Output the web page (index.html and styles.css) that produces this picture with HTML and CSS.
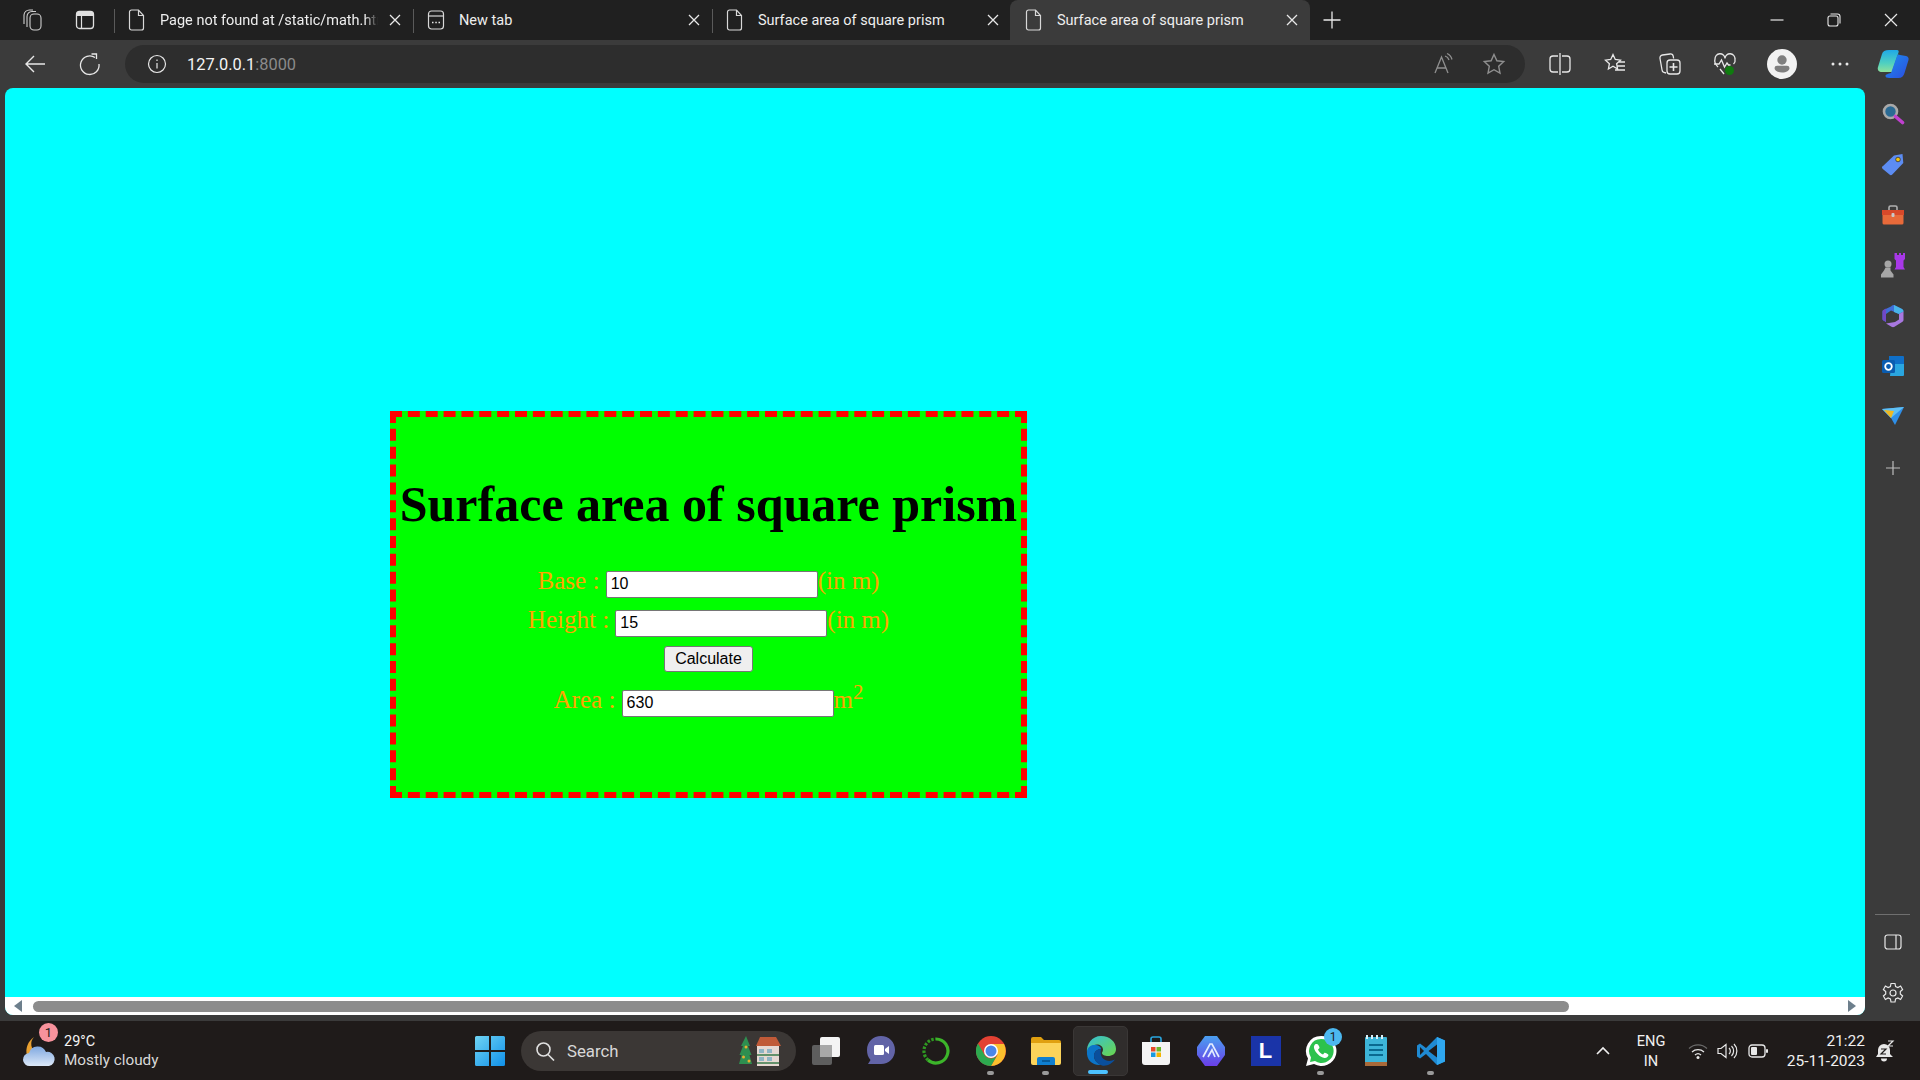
FILE: index.html
```html
<!DOCTYPE html>
<html lang="en">
<head>
    <meta charset="UTF-8">
    <title>Surface area of square prism</title>
    <link rel="stylesheet" href="styles.css">
</head>
<body>
    <svg class="defs" width="0" height="0">
        <symbol id="doc" viewBox="0 0 18 24"><path d="M3.5 2h7l5 5.5V20a2 2 0 0 1-2 2h-10a2 2 0 0 1-2-2V4a2 2 0 0 1 2-2zM10.500 2v5.500h5" fill="none" stroke="#d8d8d8" stroke-width="1.200"/></symbol>
        <symbol id="x" viewBox="0 0 16 16"><path d="M3 3l10 10M13 3L3 13" stroke="#e8e8e8" stroke-width="1.300"/></symbol>
    </svg>

    <!-- Tab strip -->
    <div class="tabstrip">
        <div class="strip-btn"><svg width="24" height="24" viewBox="0 0 24 24" fill="none" stroke="#cfcfcf" stroke-width="1.100"><rect x="10" y="6" width="11" height="16" rx="4"/><path d="M7 19V8.500A5 5 0 0 1 12 3.500h4"/><path d="M4 16V7a5.500 5.500 0 0 1 5.500-5H13"/></svg></div>
        <div class="strip-btn narrow"><svg width="22" height="24" viewBox="0 0 22 24"><rect x="2.500" y="3.500" width="17" height="17" rx="3" fill="none" stroke="#e0e0e0" stroke-width="1.300"/><path d="M2.500 8V6.500a3 3 0 0 1 3-3h11a3 3 0 0 1 3 3V8z" fill="#e0e0e0"/><path d="M7.500 8v12" stroke="#e0e0e0" stroke-width="1.200"/></svg></div>
        <div class="tab sep">
            <svg class="tab-icon" width="18" height="24"><use href="#doc"/></svg>
            <span class="tab-label fade">Page not found at /static/math.html</span>
            <svg class="tab-x" width="16" height="16"><use href="#x"/></svg>
        </div>
        <div class="tab sep">
            <svg class="tab-icon" width="18" height="24" viewBox="0 0 18 24"><rect x="1.500" y="3" width="15" height="18" rx="3" fill="none" stroke="#d8d8d8" stroke-width="1.200"/><path d="M2 8h14" stroke="#d8d8d8" stroke-width="1.200"/><path d="M5 14.500h1.500M8.300 14.500h1.500M11.500 14.500H13" stroke="#e8e8e8" stroke-width="1.600"/></svg>
            <span class="tab-label">New tab</span>
            <svg class="tab-x" width="16" height="16"><use href="#x"/></svg>
        </div>
        <div class="tab sep short">
            <svg class="tab-icon" width="18" height="24"><use href="#doc"/></svg>
            <span class="tab-label">Surface area of square prism</span>
            <svg class="tab-x" width="16" height="16"><use href="#x"/></svg>
        </div>
        <div class="tab active">
            <svg class="tab-icon" width="18" height="24"><use href="#doc"/></svg>
            <span class="tab-label">Surface area of square prism</span>
            <svg class="tab-x" width="16" height="16"><use href="#x"/></svg>
        </div>
        <div class="new-tab"><svg width="20" height="20" viewBox="0 0 20 20"><path d="M10 1.500v17M1.500 10h17" stroke="#e8e8e8" stroke-width="1.300"/></svg></div>
        <div class="win-btns">
            <svg width="16" height="16" viewBox="0 0 16 16"><path d="M1.500 8h13" stroke="#e8e8e8" stroke-width="1.200"/></svg>
            <svg width="16" height="16" viewBox="0 0 16 16" fill="none" stroke="#e8e8e8" stroke-width="1.100"><rect x="2" y="4" width="10" height="10" rx="2"/><path d="M4.500 2h7A2.500 2.500 0 0 1 14 4.500v7"/></svg>
            <svg width="16" height="16" viewBox="0 0 16 16"><path d="M2 2l12 12M14 2L2 14" stroke="#e8e8e8" stroke-width="1.200"/></svg>
        </div>
    </div>

    <!-- Address bar and toolbar -->
    <div class="toolbar">
        <div class="nav-btn"><svg width="24" height="24" viewBox="0 0 24 24" fill="none" stroke="#e8e8e8" stroke-width="1.400"><path d="M22 12H3M11 4l-8 8 8 8"/></svg></div>
        <div class="nav-btn second"><svg width="24" height="24" viewBox="0 0 24 24" fill="none" stroke="#e8e8e8" stroke-width="1.300"><path d="M17 5.500A9.300 9.300 0 1 0 21 12"/><path d="M13.500 2h5v5"/></svg></div>
        <div class="address">
            <svg width="20" height="20" viewBox="0 0 20 20" fill="none" stroke="#e8e8e8" stroke-width="1.200"><circle cx="10" cy="10" r="8.500"/><path d="M10 9v5.500M10 5.500v1.600"/></svg>
            <span class="url">127.0.0.1<span class="url-port">:8000</span></span>
            <svg class="read" width="24" height="24" viewBox="0 0 24 24" fill="none" stroke="#8f8f8f" stroke-width="1.300"><path d="M3 21L9.500 5 16 21M5.300 16h8.400"/><path d="M13 4a6 6 0 0 1 4 4M15 1.500a9 9 0 0 1 5 6"/></svg>
            <svg width="24" height="24" viewBox="0 0 24 24" fill="none" stroke="#8f8f8f" stroke-width="1.400"><path d="M12 2.500l2.900 6.300 6.800.8-5 4.700 1.300 6.800-6-3.400-6 3.400 1.300-6.800-5-4.700 6.800-.8z"/></svg>
        </div>
        <div class="tools">
            <div class="tool"><svg width="22" height="24" viewBox="0 0 22 24" fill="none" stroke="#e8e8e8" stroke-width="1.300"><path d="M9 4H4a3 3 0 0 0-3 3v10a3 3 0 0 0 3 3h5M13 4h5a3 3 0 0 1 3 3v10a3 3 0 0 1-3 3h-5M11 1v22"/></svg></div>
            <div class="tool"><svg width="24" height="24" viewBox="0 0 24 24" fill="none" stroke="#e8e8e8" stroke-width="1.300"><path d="M10 2.500l2.300 5 5.200.7-3.900 3.500 1 5.300-4.600-2.700-4.600 2.700 1-5.300L2.500 8.200l5.200-.7zM16 10h6M14.500 14h7.500M12 18h10"/></svg></div>
            <div class="tool"><svg width="24" height="24" viewBox="0 0 24 24" fill="none" stroke="#e8e8e8" stroke-width="1.300"><path d="M8 21l-2-.5a3 3 0 0 1-2-2.800L2 6.500A3 3 0 0 1 4.500 3L12 2a3 3 0 0 1 3.300 2.500l.3 2"/><rect x="9" y="8" width="13" height="14" rx="3"/><path d="M15.500 11v8M11.500 15h8" stroke-width="1.600"/></svg></div>
            <div class="tool"><svg width="24" height="24" viewBox="0 0 24 24" fill="none" stroke="#e8e8e8" stroke-width="1.300"><path d="M5 15C2 12 1 10 2 7a5 5 0 0 1 10-.5A5 5 0 0 1 22 7c.5 2-.5 4-1.500 5"/><path d="M1 12h5l2.500-4 3 7 2.500-4 1.500 2h2M7 17l4 5"/><circle cx="16.500" cy="18.500" r="4.500" fill="#0f7b0f" stroke="none"/></svg></div>
            <div class="avatar"><svg width="30" height="30" viewBox="0 0 30 30"><circle cx="15" cy="15" r="15" fill="#f2f2f2"/><circle cx="15" cy="11" r="4.700" fill="#7e7e7e"/><path d="M7.500 19a2.500 2.500 0 0 1 2.500-2.300h10a2.500 2.500 0 0 1 2.500 2.300c0 2.500-3 4.500-7.500 4.500s-7.500-2-7.500-4.500z" fill="#7e7e7e"/></svg></div>
            <div class="tool"><svg width="20" height="6" viewBox="0 0 20 6" fill="#e8e8e8"><circle cx="3" cy="3" r="1.500"/><circle cx="10" cy="3" r="1.500"/><circle cx="17" cy="3" r="1.500"/></svg></div>
            <div class="tool copilot"><svg width="32" height="30" viewBox="0 0 32 30"><defs><linearGradient id="cpa" x1="0" y1="0" x2="0" y2="1"><stop offset="0" stop-color="#1fa8e8"/><stop offset=".6" stop-color="#4fd0c0"/><stop offset="1" stop-color="#8fe09a"/></linearGradient><linearGradient id="cpb" x1="0" y1="0" x2="1" y2="1"><stop offset="0" stop-color="#1b8fee"/><stop offset="1" stop-color="#2d4de0"/></linearGradient></defs><path d="M12 1h8c1.500 0 2 1 1.500 2.500L15 23H5c-3 0-5-2-4-5l4-13c.7-2.500 3-4 7-4z" fill="url(#cpa)"/><path d="M14 24l6-17c.5-1.500 1.500-2 3-1l6 1c2 .5 3 2 2.500 4l-4 13c-.7 3-3 5-6 5h-9c-3 0-4-1-4-2 0-2 3-2 5.500-3z" fill="url(#cpb)"/></svg></div>
        </div>
    </div>

    <div class="main">
        <div class="viewport">
            <div class="page">
                <div class="card">
                    <h1 class="card-title">Surface area of square prism</h1>
                    <div class="field">Base : <input class="num" type="text" value="10">(in m)</div>
                    <div class="field">Height : <input class="num" type="text" value="15">(in m)</div>
                    <div class="calc-row"><button class="calc" type="button">Calculate</button></div>
                    <div class="field result">Area : <input class="num" type="text" value="630">m<sup>2</sup></div>
                </div>
            </div>
            <div class="hscroll">
                <svg width="10" height="12" viewBox="0 0 10 12"><path d="M9 0v12L1 6z" fill="#6d7f8c"/></svg>
                <div class="hscroll-track"><div class="hscroll-thumb"></div></div>
                <svg width="10" height="12" viewBox="0 0 10 12"><path d="M1 0v12l8-6z" fill="#6d7f8c"/></svg>
            </div>
        </div>

        <!-- Edge sidebar -->
        <div class="sidebar">
            <div class="side-btn"><svg width="24" height="24" viewBox="0 0 24 24"><circle cx="9.500" cy="9.500" r="6.500" fill="#2a6a94" stroke="#a9a9a9" stroke-width="2.600"/><path d="M14.500 14.500l7 6" stroke="#c040d0" stroke-width="3.600" stroke-linecap="round"/></svg></div>
            <div class="side-btn"><svg width="24" height="24" viewBox="0 0 24 24"><path d="M1.500 13.500L13 2.500l8.500-1.500.8 9-11 11.500a2 2 0 0 1-2.800 0l-7-5.800a2 2 0 0 1 0-2.700z" fill="#5c8cf2"/><circle cx="17" cy="6.500" r="2.300" fill="#f2c40f" stroke="#333" stroke-width=".8"/></svg></div>
            <div class="side-btn"><svg width="24" height="22" viewBox="0 0 24 22"><path d="M8 6V3.500A1.500 1.500 0 0 1 9.500 2h5A1.500 1.500 0 0 1 16 3.500V6" fill="none" stroke="#b0b0b0" stroke-width="1.600"/><path d="M1 6h22v5H1z" fill="#d8492a"/><path d="M1.500 11h21v8a1.500 1.500 0 0 1-1.500 1.500H3A1.500 1.500 0 0 1 1.500 19z" fill="#e86a3a"/><rect x="10.500" y="9" width="3" height="4" rx="1" fill="#c9c9c9"/></svg></div>
            <div class="side-btn"><svg width="24" height="26" viewBox="0 0 24 26"><path d="M13.500 0h2.500v2h2V0h2v2h2V0h2v6l-1.500 1.500V14l1.500 2.500h-10.500l1.500-2.500V7.500L13.500 6z" fill="#a838e8"/><circle cx="7" cy="11" r="3.500" fill="#a6a6a6"/><path d="M4.500 14.500h5v3l3 4v3H0v-3l3-4z" fill="#a6a6a6"/></svg></div>
            <div class="side-btn"><svg width="22" height="24" viewBox="0 0 22 24"><path d="M9 2.500A3 3 0 0 1 12 1l8 4a3 3 0 0 1 1.500 2.500L17 10l-8-3.500L4 10v8l-2.500-1.500A1.500 1.500 0 0 1 .5 15V7.500A2 2 0 0 1 1.500 6z" fill="#3f6ed8"/><path d="M12 1l8 4a3 3 0 0 1 1.500 2.500L17 10l-5-2z" fill="#48b4e8"/><path d="M21.500 7.500V16a2 2 0 0 1-1 1.700l-8 5a3 3 0 0 1-3 0L4 19.500 13 18l4-2.500V10z" fill="#a878e0"/><path d="M.5 7.500A2 2 0 0 1 1.500 6L4 4.500V18l-2.500-1.500A1.500 1.500 0 0 1 .5 15z" fill="#7248c8"/></svg></div>
            <div class="side-btn"><svg width="24" height="24" viewBox="0 0 24 24"><path d="M8 1h14a1 1 0 0 1 1 1v7H8z" fill="#0f6fc8"/><path d="M10 9h13v11a1 1 0 0 1-1 1H9z" fill="#2aa6e0"/><rect x="1" y="5" width="13" height="13" rx="1.500" fill="#0a5cb0"/><circle cx="7.500" cy="11.500" r="3.300" fill="none" stroke="#fff" stroke-width="1.800"/></svg></div>
            <div class="side-btn"><svg width="24" height="22" viewBox="0 0 24 22"><path d="M1 3l22-2-9 18-4-7z" fill="#2f8fe8"/><path d="M1 3l9 9L23 1z" fill="#5fc0f4"/><path d="M3 4l7 8 3-7z" fill="#f0b820"/></svg></div>
            <div class="side-btn"><svg width="16" height="16" viewBox="0 0 16 16"><path d="M8 1v14M1 8h14" stroke="#bdbdbd" stroke-width="1.200"/></svg></div>
            <div class="side-end">
                <div class="side-line"></div>
                <div class="side-btn"><svg width="20" height="20" viewBox="0 0 20 20" fill="none" stroke="#e8e8e8" stroke-width="1.200"><rect x="2" y="3" width="16" height="14" rx="2.500"/><path d="M13 3v14"/></svg></div>
                <div class="side-btn"><svg width="22" height="22" viewBox="0 0 22 22" fill="none" stroke="#e8e8e8" stroke-width="1.200"><circle cx="11" cy="11" r="3"/><path d="M9 1.500h4l.6 3 2.300 1 2.700-1.500 2 3.500-2.300 2v2.500l2.300 2-2 3.500-2.700-1.500-2.300 1-.6 3H9l-.6-3-2.300-1-2.700 1.500-2-3.500 2.300-2V9.500L1.400 7.500l2-3.500 2.700 1.500 2.300-1z"/></svg></div>
            </div>
        </div>
    </div>

    <!-- Windows taskbar -->
    <div class="taskbar">
        <div class="weather">
            <div class="weather-icon">
                <svg width="36" height="36" viewBox="0 0 36 36"><defs><linearGradient id="cloud" x1="0" y1="0" x2="0" y2="1"><stop offset="0" stop-color="#7fa8e0"/><stop offset="1" stop-color="#dce8f8"/></linearGradient></defs><path d="M12 4a10 10 0 0 0 3 16l-10 2C3 16 6 8 12 4z" fill="#e8a030"/><path d="M8 33a6.500 6.500 0 0 1-1-13 9 9 0 0 1 17-1 7 7 0 0 1 3 14z" fill="url(#cloud)"/></svg>
                <span class="weather-badge">1</span>
            </div>
            <div class="weather-text"><div class="temp">29°C</div><div>Mostly cloudy</div></div>
        </div>
        <div class="start"><svg width="30" height="30" viewBox="0 0 30 30"><defs><linearGradient id="win" x1="0" y1="0" x2="1" y2="1"><stop offset="0" stop-color="#6fd4f4"/><stop offset="1" stop-color="#1090e8"/></linearGradient></defs><path d="M0 1.500A1.500 1.500 0 0 1 1.500 0H14v14H0zM16 0h12.500A1.500 1.500 0 0 1 30 1.500V14H16zM0 16h14v14H1.500A1.500 1.500 0 0 1 0 28.500zM16 16h14v12.500a1.500 1.500 0 0 1-1.500 1.500H16z" fill="url(#win)"/></svg></div>
        <div class="search">
            <svg width="20" height="20" viewBox="0 0 20 20" fill="none" stroke="#e0e0e0" stroke-width="1.600"><circle cx="8.500" cy="8.500" r="6.500"/><path d="M13 13.500l6 6"/></svg>
            <span class="search-text">Search</span>
            <svg class="search-art" width="44" height="32" viewBox="0 0 44 32"><path d="M9 1l4 10h-2l3.500 9h-2l2.500 9H2l2.500-9h-2L6 11H4z" fill="#2e8f50"/><circle cx="9" cy="12" r="1.500" fill="#e8b030"/><circle cx="6.500" cy="22" r="1.500" fill="#e8b030"/><circle cx="12" cy="26" r="1.500" fill="#e8b030"/><rect x="20" y="10" width="22" height="21" fill="#e6d8d2"/><path d="M19 11l4-9h16l5 9z" fill="#c05a38"/><path d="M22 14h5v4h-5zM30 14h5v4h-5zM22 22h5v4h-5zM30 22h5v4h-5z" fill="#8fb4c4"/><path d="M20 20h22M20 28h22" stroke="#3a7a4a" stroke-width="1.500"/></svg>
        </div>
        <div class="task-icons">
            <div class="task"><svg width="30" height="30" viewBox="0 0 30 30"><rect x="1" y="9" width="20" height="20" rx="2" fill="#5e5e5e"/><rect x="9" y="1" width="20" height="20" rx="2" fill="#f4f4f4"/><rect x="9" y="9" width="12" height="12" fill="#a8a8a8"/></svg></div>
            <div class="task"><svg width="30" height="32" viewBox="0 0 30 32"><path d="M15 1c8 0 14 6 14 14s-6 14-14 14H2l2.500-4C2 22 1 19 1 15 1 7 7 1 15 1z" fill="#6264a7"/><rect x="8" y="10" width="10" height="10" rx="1.500" fill="#fff"/><path d="M19 14l4-3v8l-4-3z" fill="#fff"/></svg></div>
            <div class="task"><svg width="30" height="30" viewBox="0 0 30 30" fill="none"><path d="M15 3a12 12 0 1 1-8 21" stroke="#3cb52a" stroke-width="3.200"/><path d="M7 24A12 12 0 0 1 15 3" stroke="#2f9a22" stroke-width="3.200" stroke-dasharray="2.500 1.500"/></svg></div>
            <div class="task dot"><svg width="30" height="30" viewBox="0 0 30 30"><circle cx="15" cy="15" r="15" fill="#e34133"/><path d="M15 8h13a15 15 0 0 1-13 22l6.500-11.300z" fill="#fbc02d"/><path d="M2 22.500A15 15 0 0 0 15 30l6.500-11.300A7.500 7.500 0 0 1 8.500 18.700L2 7.500A15 15 0 0 0 2 22.500z" fill="#2da94f"/><circle cx="15" cy="15" r="7" fill="#fff"/><circle cx="15" cy="15" r="5.500" fill="#4a86e8"/></svg></div>
            <div class="task dot"><svg width="30" height="28" viewBox="0 0 30 28"><path d="M0 2a2 2 0 0 1 2-2h8l3 3h15a2 2 0 0 1 2 2v3H0z" fill="#e0a010"/><path d="M0 6h30v20a2 2 0 0 1-2 2H2a2 2 0 0 1-2-2z" fill="#fbd35a"/><path d="M6 28v-6a2 2 0 0 1 2-2h14a2 2 0 0 1 2 2v6z" fill="#0f7fd0"/><path d="M11 24h8" stroke="#06508a" stroke-width="1.500"/></svg></div>
            <div class="task current"><svg width="30" height="30" viewBox="0 0 30 30"><defs><linearGradient id="edge" x1="0" y1="0" x2="1" y2="1"><stop offset="0" stop-color="#34c0d8"/><stop offset="1" stop-color="#6cd64a"/></linearGradient></defs><path d="M15 0c9 0 15 6 15 13 0 5-4 7-8 7-3 0-6-1-6-3 0-1 1-1.500 1-3.500 0-3-3-5-6-5C6 8.500 2 13 1 17 0 8 6 0 15 0z" fill="url(#edge)"/><path d="M1 15C2 10 6 8.500 10 9c3 .5 5 2 5 4-4 0-7 3-7 7 0 4 3 7 7 9C7 30 0 24 1 15z" fill="#0c75c8"/><path d="M15 13c-4 0-7 3-7 7 0 4 3.500 8 8 9.500 5 1 10-2 13-6-4 2-9 2-12-1-2-2-3-5-2-9.500z" fill="#0a4f9c"/></svg></div>
            <div class="task"><svg width="30" height="30" viewBox="0 0 30 30"><path d="M10 6V3a2 2 0 0 1 2-2h6a2 2 0 0 1 2 2v3" fill="none" stroke="#2aa7e0" stroke-width="1.600"/><path d="M1 6h28v20a3 3 0 0 1-3 3H4a3 3 0 0 1-3-3z" fill="#f4f4f4"/><path d="M10 11h4.500v4.500H10z" fill="#e84a2a"/><path d="M15.500 11H20v4.500h-4.500z" fill="#6ab82a"/><path d="M10 16.500h4.500V21H10z" fill="#1a9ae0"/><path d="M15.500 16.500H20V21h-4.500z" fill="#f4b400"/></svg></div>
            <div class="task"><svg width="28" height="32" viewBox="0 0 28 32"><defs><linearGradient id="arc" x1="0" y1="0" x2="0" y2="1"><stop offset="0" stop-color="#4aa0f0"/><stop offset="1" stop-color="#6a3ee8"/></linearGradient></defs><path d="M8 1h12l8 11v8l-8 11H8L0 20v-8z" fill="url(#arc)"/><path d="M6 22L13 9l2 0 7 13M11 22l4-7 3 7" fill="none" stroke="#e4ecff" stroke-width="1.700"/></svg></div>
            <div class="task"><div class="l-tile">L</div></div>
            <div class="task dot"><svg width="32" height="32" viewBox="0 0 32 32"><path d="M16 1a15 15 0 0 0-13 22.500L1 31l8-2A15 15 0 1 0 16 1z" fill="#fff"/><path d="M16 4a12 12 0 0 0-10 18.500L5 27l5-1A12 12 0 1 0 16 4z" fill="#2cc24d"/><path d="M11 9c-1 0-2.500 2-2 4 .8 4 6 9.500 10.500 10 2 .2 4-1.500 4-3 0-.8-3-2.300-4-2.300l-1.500 1.800c-2-.5-4.500-3-5-5l1.500-1.500c.2-1-1.300-4-2.500-4z" fill="#fff"/></svg><span class="wa-badge">1</span></div>
            <div class="task"><svg width="24" height="32" viewBox="0 0 24 32"><rect x="1" y="2" width="22" height="29" rx="1" fill="#3db5d8"/><rect x="1" y="27" width="22" height="4" fill="#a86a3a"/><path d="M3 0v4M8 0v4M13 0v4M18 0v4" stroke="#d8f0f8" stroke-width="2"/><path d="M5 10h14M5 15h14M5 20h14" stroke="#0a6a90" stroke-width="1.800"/></svg></div>
            <div class="task dot"><svg width="30" height="30" viewBox="0 0 30 30"><path d="M21 1L10 12 4 7.500 1 9.500v11l3 2 6-4.500L21 29l8-3.500V4.500z" fill="#1f8ad2"/><path d="M21 1v28l8-3.500V4.500z" fill="#2fa7ef"/><path d="M21 8.500L12.500 15l8.500 6.500zM4 11v8l4-4z" fill="#1e1b1a"/></svg></div>
        </div>
        <div class="tray">
            <svg class="caret" width="14" height="10" viewBox="0 0 14 10"><path d="M1 8l6-6 6 6" fill="none" stroke="#f0f0f0" stroke-width="1.600"/></svg>
            <div class="lang"><div>ENG</div><div>IN</div></div>
            <svg width="20" height="18" viewBox="0 0 20 18" fill="none"><path d="M1 6.500a13 13 0 0 1 18 0" stroke="#6a6a6a" stroke-width="1.200"/><path d="M4 10a9 9 0 0 1 12 0M7 13a4.500 4.500 0 0 1 6 0" stroke="#e8e8e8" stroke-width="1.300"/><circle cx="10" cy="15.500" r="1.500" fill="#e8e8e8"/></svg>
            <svg width="22" height="18" viewBox="0 0 22 18" fill="none" stroke="#e8e8e8" stroke-width="1.200"><path d="M1 6.500h3L9 2.500v13l-5-4H1zM12 6a4 4 0 0 1 0 6M14.500 4a7 7 0 0 1 0 10M17 2a10 10 0 0 1 0 14"/></svg>
            <svg width="20" height="14" viewBox="0 0 20 14"><rect x="1" y="1" width="16" height="12" rx="3" fill="none" stroke="#e8e8e8" stroke-width="1.300"/><rect x="3" y="3" width="6" height="8" rx="1" fill="#e8e8e8"/><rect x="18" y="5" width="2" height="4" rx="1" fill="#e8e8e8"/></svg>
            <div class="clock"><div>21:22</div><div>25-11-2023</div></div>
            <svg class="bell" width="20" height="22" viewBox="0 0 20 22"><path d="M9 4a6 6 0 0 1 6 6v4l3 3H1l2-3v-4a6 6 0 0 1 6-6z" fill="#e8e8e8"/><path d="M6 18.500a3 3 0 0 0 6 0z" fill="#e8e8e8"/><path d="M6 9h5l-5 5h5" fill="none" stroke="#1e1b1a" stroke-width="1.200"/><path d="M13 1h5l-5 5h5" fill="none" stroke="#e8e8e8" stroke-width="1.200"/></svg>
        </div>
    </div>
</body>
</html>
```

FILE: styles.css
```css
/* Browser window chrome, then the page itself, then the taskbar */
* {
    box-sizing: border-box;
}
html, body {
    margin: 0;
    height: 1080px;
    overflow: hidden;
}
body {
    display: flex;
    flex-direction: column;
    background-color: #3b3b3b;
    font-family: Roboto, "Noto Sans", sans-serif;
    color: #f0f0f0;
}
svg {
    display: block;
    flex-shrink: 0;
}
.defs {
    position: absolute;
}

/* tab strip */
.tabstrip {
    display: flex;
    align-items: stretch;
    height: 40px;
    background-color: #202020;
}
.strip-btn {
    width: 63px;
    display: flex;
    align-items: center;
    justify-content: center;
}
.strip-btn.narrow {
    width: 51px;
    padding-left: 11px;
    justify-content: flex-start;
}
.tab {
    width: 299px;
    display: flex;
    align-items: center;
    padding-left: 14px;
    font-size: 14.500px;
    color: #eeeeee;
}
.tab.short {
    width: 298px;
}
.sep {
    background: linear-gradient(#5a5a5a, #5a5a5a) left 9px / 1px 24px no-repeat;
}
.tab.active {
    width: 300px;
    padding-left: 15px;
    background-color: #3b3b3b;
    border-radius: 8px 8px 0 0;
}
.tab-label {
    width: 218px;
    margin-left: 14px;
    margin-right: 9px;
    white-space: nowrap;
    overflow: hidden;
}
.fade {
    -webkit-mask-image: linear-gradient(to right, #000 205px, transparent 218px);
    mask-image: linear-gradient(to right, #000 205px, transparent 218px);
}
.new-tab {
    width: 44px;
    display: flex;
    align-items: center;
    justify-content: center;
}
.win-btns {
    margin-left: auto;
    display: flex;
    align-items: center;
    gap: 41px;
    padding-right: 21px;
}

/* toolbar */
.toolbar {
    height: 48px;
    display: flex;
    align-items: center;
    padding-left: 23px;
}
.nav-btn {
    width: 55px;
}
.nav-btn.second {
    width: 45px;
}
.address {
    width: 1400px;
    height: 38px;
    margin-left: 2px;
    padding: 0 19px 0 22px;
    display: flex;
    align-items: center;
    background-color: #2d2d2d;
    border-radius: 19px;
}
.url {
    margin-left: 20px;
    font-size: 16.400px;
    color: #f4f4f4;
}
.url-port {
    color: #8a8a8a;
}
.read {
    margin-left: auto;
    margin-right: 26px;
}
.tools {
    display: flex;
    align-items: center;
    padding-left: 7px;
}
.tool {
    width: 55px;
    display: flex;
    justify-content: center;
}
.avatar {
    width: 60px;
    display: flex;
    justify-content: center;
}
.tool.copilot {
    width: 52px;
}

/* page */
.main {
    height: 933px;
    display: flex;
}
.viewport {
    width: 1860px;
    height: 927px;
    margin-left: 5px;
    display: flex;
    flex-direction: column;
    background-color: #00ffff;
    border-radius: 8px;
    overflow: hidden;
}
.page {
    flex: 1;
    padding: 323px 0 0 385px;
}
.card {
    width: 637px;
    height: 387px;
    border: 6px dashed #ff0000;
    background-color: #00ff00;
    padding-top: 30px;
    text-align: center;
    font-family: "Liberation Serif", serif;
    font-size: 25px;
    color: #ffa500;
}
.card-title {
    margin: 30px 0 33px;
    font-size: 50px;
    line-height: 55px;
    color: #000000;
    white-space: nowrap;
}
.field {
    height: 32px;
    line-height: 32px;
    margin-bottom: 7px;
    white-space: nowrap;
}
.num {
    width: 212px;
    height: 27px;
    padding: 1px 4px;
    margin: 0;
    border: 1.500px solid #767676;
    border-radius: 2px;
    background-color: #ffffff;
    font-family: "Liberation Sans", Arial, sans-serif;
    font-size: 16px;
    color: #000000;
}
.calc-row {
    height: 26px;
    margin-top: 10px;
    line-height: 0;
}
.calc {
    width: 89px;
    height: 26px;
    padding: 0;
    border: 1px solid #767676;
    border-radius: 3px;
    background-color: #efefef;
    font-family: "Liberation Sans", Arial, sans-serif;
    font-size: 16px;
    color: #000000;
}
.result {
    margin-top: 12px;
}
.result sup {
    font-size: 20.750px;
    line-height: 0;
}
.hscroll {
    height: 18px;
    display: flex;
    align-items: center;
    padding: 0 8px;
    background-color: #ffffff;
}
.hscroll-track {
    flex: 1;
    margin-left: 5px;
    padding: 0 278px 0 5px;
}
.hscroll-thumb {
    height: 11px;
    border-radius: 6px;
    background-color: #8c8c8c;
}

/* sidebar */
.sidebar {
    width: 55px;
    height: 933px;
    display: flex;
    flex-direction: column;
    align-items: center;
    padding-top: 1px;
}
.side-btn {
    height: 50.500px;
    width: 100%;
    display: flex;
    align-items: center;
    justify-content: center;
}
.side-end {
    margin-top: auto;
    width: 100%;
    display: flex;
    flex-direction: column;
    align-items: center;
    padding-bottom: 3px;
}
.side-line {
    width: 35px;
    height: 1px;
    margin-bottom: 2px;
    background-color: #6f6f6f;
}

/* taskbar */
.taskbar {
    height: 59px;
    display: flex;
    align-items: center;
    background-color: #1f1b1a;
    font-size: 14px;
}
.weather {
    width: 460px;
    display: flex;
    align-items: center;
    padding-left: 22px;
}
.weather-icon {
    position: relative;
    width: 36px;
    height: 36px;
}
.weather-badge {
    position: absolute;
    left: 17px;
    top: -10px;
    width: 19px;
    height: 19px;
    border-radius: 50%;
    background-color: #f8929c;
    color: #1f1b1a;
    font-size: 13px;
    line-height: 19px;
    text-align: center;
}
.weather-text {
    margin-left: 6px;
    line-height: 19px;
    font-size: 15.300px;
    color: #d8d8d8;
}
.temp {
    font-size: 14.500px;
    color: #f4f4f4;
}
.start {
    width: 61px;
    padding-left: 15px;
}
.search {
    width: 275px;
    height: 40px;
    display: flex;
    align-items: center;
    padding-left: 14px;
    background-color: #3b3735;
    border-radius: 20px;
}
.search-text {
    margin-left: 12px;
    font-size: 16.800px;
    color: #d8d8d8;
}
.search-art {
    margin-left: auto;
    margin-right: 15px;
}
.task-icons {
    display: flex;
    margin-left: 2px;
}
.task {
    width: 55px;
    height: 50px;
    display: flex;
    align-items: center;
    justify-content: center;
    position: relative;
    border-radius: 5px;
}
.task.dot::after,
.task.current::after {
    content: "";
    position: absolute;
    bottom: 1px;
    left: 24px;
    width: 7px;
    height: 4px;
    border-radius: 2px;
    background-color: #9a9a9a;
}
.task.current {
    background-color: #302d2c;
    border: 1px solid #3a3736;
}
.task.current::after {
    left: 14px;
    width: 20px;
    background-color: #4cc2ff;
}
.l-tile {
    width: 30px;
    height: 30px;
    background-color: #1a34a8;
    color: #ffffff;
    font-family: "Liberation Sans", sans-serif;
    font-size: 22px;
    font-weight: bold;
    line-height: 30px;
    text-align: center;
}
.wa-badge {
    position: absolute;
    left: 31px;
    top: 2px;
    width: 18px;
    height: 18px;
    border-radius: 50%;
    background-color: #4cb8f0;
    color: #1f1b1a;
    font-size: 12px;
    line-height: 18px;
    text-align: center;
}
.tray {
    margin-left: auto;
    display: flex;
    align-items: center;
    gap: 9px;
    padding-right: 25px;
}
.caret {
    margin-right: 12px;
}
.lang {
    width: 40px;
    margin-right: 8px;
    font-size: 14.600px;
    text-align: center;
    line-height: 20px;
}
.clock {
    width: 80px;
    margin-left: 8px;
    margin-right: 1px;
    font-size: 15.500px;
    text-align: right;
    line-height: 20px;
    white-space: nowrap;
}
```
